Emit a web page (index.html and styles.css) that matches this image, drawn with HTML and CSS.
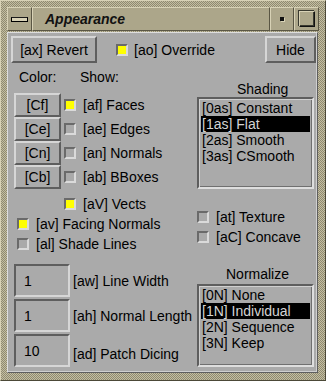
FILE: index.html
```html
<!DOCTYPE html>
<html lang="en">
<head>
    <meta charset="UTF-8">
    <title>Appearance</title>
    <link rel="stylesheet" href="styles.css">
</head>
<body>
    <div class="window">
        <div class="titlebar">
            <div class="tb-btn menu"><span class="bar"></span></div>
            <div class="title">Appearance</div>
            <div class="tb-btn min"><span class="dot"></span></div>
            <div class="tb-btn max"><span class="square"></span></div>
        </div>
        <div class="panel">
            <div class="toprow">
                <div class="button revert">[ax] Revert</div>
                <div class="check override"><span class="box on"></span>[ao] Override</div>
                <div class="button hide">Hide</div>
            </div>
            <div class="main">
                <div class="left">
                    <div class="heads"><span class="head-color">Color:</span><span>Show:</span></div>
                    <div class="color-rows">
                        <div class="color-row">
                            <div class="button cbtn">[Cf]</div>
                            <div class="check"><span class="box on"></span>[af] Faces</div>
                        </div>
                        <div class="color-row">
                            <div class="button cbtn">[Ce]</div>
                            <div class="check"><span class="box"></span>[ae] Edges</div>
                        </div>
                        <div class="color-row">
                            <div class="button cbtn">[Cn]</div>
                            <div class="check"><span class="box"></span>[an] Normals</div>
                        </div>
                        <div class="color-row">
                            <div class="button cbtn">[Cb]</div>
                            <div class="check"><span class="box"></span>[ab] BBoxes</div>
                        </div>
                    </div>
                    <div class="check vects"><span class="box on"></span>[aV] Vects</div>
                    <div class="check wide"><span class="box on"></span>[av] Facing Normals</div>
                    <div class="check wide"><span class="box"></span>[al] Shade Lines</div>
                    <div class="fields">
                        <div class="field-row"><div class="field">1</div><span class="field-label">[aw] Line Width</span></div>
                        <div class="field-row"><div class="field">1</div><span class="field-label">[ah] Normal Length</span></div>
                        <div class="field-row"><div class="field">10</div><span class="field-label dicing">[ad] Patch Dicing</span></div>
                    </div>
                </div>
                <div class="right">
                    <div class="caption shading">Shading</div>
                    <ul class="list shading-list">
                        <li>[0as] Constant</li>
                        <li class="selected">[1as] Flat</li>
                        <li>[2as] Smooth</li>
                        <li>[3as] CSmooth</li>
                    </ul>
                    <div class="check right-check first"><span class="box"></span>[at] Texture</div>
                    <div class="check right-check"><span class="box"></span>[aC] Concave</div>
                    <div class="caption normalize">Normalize</div>
                    <ul class="list normalize-list">
                        <li>[0N] None</li>
                        <li class="selected">[1N] Individual</li>
                        <li>[2N] Sequence</li>
                        <li>[3N] Keep</li>
                    </ul>
                </div>
            </div>
        </div>
    </div>
</body>
</html>
```

FILE: styles.css
```css
* {
    box-sizing: border-box;
}

body {
    margin: 0;
    font-family: "Liberation Sans", Arial, sans-serif;
    font-size: 14px;
    color: #000000;
    background-color: #8f8a70;
}

.window {
    width: 326px;
    height: 381px;
    display: flex;
    flex-direction: column;
    padding: 6px 6px 7px 6px;
    border: 1px solid;
    border-color: #d8d2b6 #4c4938 #4c4938 #d8d2b6;
    background: repeating-conic-gradient(#c4bea2 0 25%, #8f8a70 0 50%) 0 0 / 2px 2px;
}

/* title bar */
.titlebar {
    height: 24px;
    display: flex;
    background-color: #aca68a;
}

.tb-btn,
.title {
    border: 1px solid;
    border-color: #d8d2b6 #5a5644 #5a5644 #d8d2b6;
    display: flex;
    align-items: center;
    justify-content: center;
}

.menu {
    width: 25px;
}

.bar {
    width: 17px;
    height: 5px;
    background-color: #d8d2b6;
    border: 1px solid #000000;
    border-top-color: #1a1a1a;
}

.title {
    flex: 1;
    justify-content: flex-start;
    padding-left: 12px;
    font-weight: bold;
    font-style: italic;
    font-size: 14px;
    color: #111111;
}

.min {
    width: 24px;
}

.dot {
    width: 4px;
    height: 4px;
    background-color: #111111;
    box-shadow: 1px 1px 0 #d8d2b6;
}

.max {
    width: 25px;
}

.square {
    width: 16px;
    height: 16px;
    border: 1px solid;
    border-color: #d8d2b6 #111111 #111111 #d8d2b6;
    box-shadow: inset -1px -1px 0 #3a3a30, -1px -1px 0 #3a3a30;
}

/* main panel */
.panel {
    flex: 1;
    margin-top: 1px;
    margin-right: 1px;
    padding: 3px 1px 0 3px;
    background-color: #aaaaaa;
    border: 1px solid;
    border-color: #dedede #5e5e5e #5e5e5e #dedede;
    box-shadow: inset -1px -1px 0 #d0d0d0;
}

.button {
    display: flex;
    align-items: center;
    justify-content: center;
    background-color: #aaaaaa;
    border: 2px solid;
    border-color: #d6d6d6 #5e5e5e #5e5e5e #d6d6d6;
}

.toprow {
    height: 27px;
    display: flex;
    align-items: center;
}

.revert {
    width: 86px;
    height: 27px;
}

.override {
    margin-left: 19px;
}

.hide {
    margin-left: auto;
    width: 51px;
    height: 27px;
}

.check {
    display: flex;
    align-items: center;
    white-space: nowrap;
}

.box {
    width: 12px;
    height: 12px;
    margin-right: 6px;
    background-color: #aaaaaa;
    border: 2px solid;
    border-color: #6a6a6a #dadada #dadada #6a6a6a;
}

.box.on {
    background-color: #ffff00;
}

.main {
    display: flex;
}

.left {
    width: 186px;
}

.heads {
    display: flex;
    margin-top: 4px;
    height: 20px;
    align-items: center;
}

.head-color {
    width: 69px;
    padding-left: 8px;
}

.color-rows {
    margin-top: 6px;
}

.color-row {
    height: 24px;
    display: flex;
    align-items: center;
}

.cbtn {
    margin-left: 3px;
    width: 47px;
    height: 24px;
}

.color-row .check {
    margin-left: 3px;
}

.color-row .box {
    margin-right: 7px;
}

.vects {
    height: 20px;
    margin-top: 5px;
    padding-left: 53px;
}

.vects .box {
    margin-right: 7px;
}

.wide {
    height: 20px;
    padding-left: 6px;
}

.wide .box {
    margin-right: 7px;
}

.fields {
    margin-top: 10px;
    display: flex;
    flex-direction: column;
    gap: 2px;
}

.field-row {
    display: flex;
    align-items: center;
    height: 33px;
}

.field {
    margin-left: 3px;
    width: 56px;
    height: 33px;
    padding-left: 8px;
    display: flex;
    align-items: center;
    border: 2px solid;
    border-color: #5e5e5e #d6d6d6 #d6d6d6 #5e5e5e;
}

.field-label {
    margin-left: 3px;
}

.dicing {
    margin-top: 6px;
}

.right {
    width: 117px;
}

.caption {
    line-height: 16px;
}

.shading {
    margin-top: 18px;
    padding-left: 40px;
}

.normalize {
    margin-top: 19px;
    margin-bottom: 2px;
    padding-left: 29px;
}

.list {
    list-style: none;
    margin: 0;
    padding: 1px 2px;
    border: 2px solid;
    border-color: #5e5e5e #dedede #dedede #5e5e5e;
    box-shadow: inset 1px 1px 0 #d0d0d0, inset -1px -1px 0 #707070;
    font-size: 14px;
}

.list li {
    height: 16px;
    line-height: 16px;
    padding-left: 1px;
    white-space: nowrap;
}

.list li.selected {
    background-color: #000000;
    color: #d4d4d4;
}

.shading-list {
    height: 92px;
}

.normalize-list {
    height: 83px;
}

.right-check {
    height: 20px;
}

.right-check .box {
    margin-right: 7px;
}

.right-check.first {
    margin-top: 18px;
}
```
